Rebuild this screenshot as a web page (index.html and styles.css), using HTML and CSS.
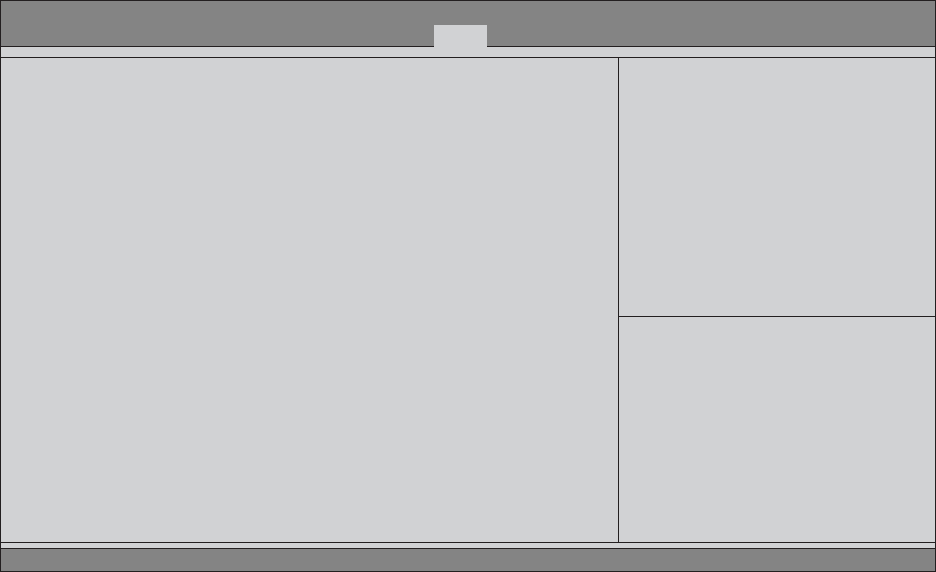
FILE: index.html
```html
<!DOCTYPE html>
<html lang="en">
<head>
  <meta charset="UTF-8" />
  <meta name="viewport" content="width=device-width, initial-scale=1.0" />
  <title>Setup</title>
  <link rel="stylesheet" href="styles.css">
</head>
<body>
  <div class="screen">
    <div class="top-bar">
      <div class="tab"></div>
    </div>
    <div class="sub-strip"></div>
    <div class="main">
      <div class="settings"></div>
      <div class="side">
        <div class="help"></div>
        <div class="keys"></div>
      </div>
    </div>
    <div class="thin-strip"></div>
    <div class="bottom-bar"></div>
  </div>
</body>
</html>
```

FILE: styles.css
```css
* {
  box-sizing: border-box;
  margin: 0;
  padding: 0;
}

body {
  font-family: 'Liberation Sans', Arial, sans-serif;
  background-color: #d1d2d4;
}

.screen {
  width: 936px;
  height: 572px;
  border: 1px solid #231f20;
  background-color: #d1d2d4;
  display: flex;
  flex-direction: column;
}

.top-bar {
  height: 46px;
  background-color: #848484;
  border-bottom: 1px solid #231f20;
  display: flex;
  align-items: flex-end;
  padding-left: 433px;
}

.tab {
  width: 53px;
  height: 22px;
  margin-bottom: -1px;
  background-color: #d1d2d4;
}

.sub-strip {
  height: 11px;
  border-bottom: 1px solid #231f20;
}

.main {
  height: 485px;
  border-bottom: 1px solid #231f20;
  display: flex;
}

.settings {
  width: 618px;
  border-right: 1px solid #231f20;
}

.side {
  flex: 1;
  display: flex;
  flex-direction: column;
}

.help {
  height: 259px;
  border-bottom: 1px solid #231f20;
}

.keys {
  flex: 1;
}

.thin-strip {
  height: 6px;
  border-bottom: 1px solid #231f20;
}

.bottom-bar {
  flex: 1;
  background-color: #848484;
}
```
